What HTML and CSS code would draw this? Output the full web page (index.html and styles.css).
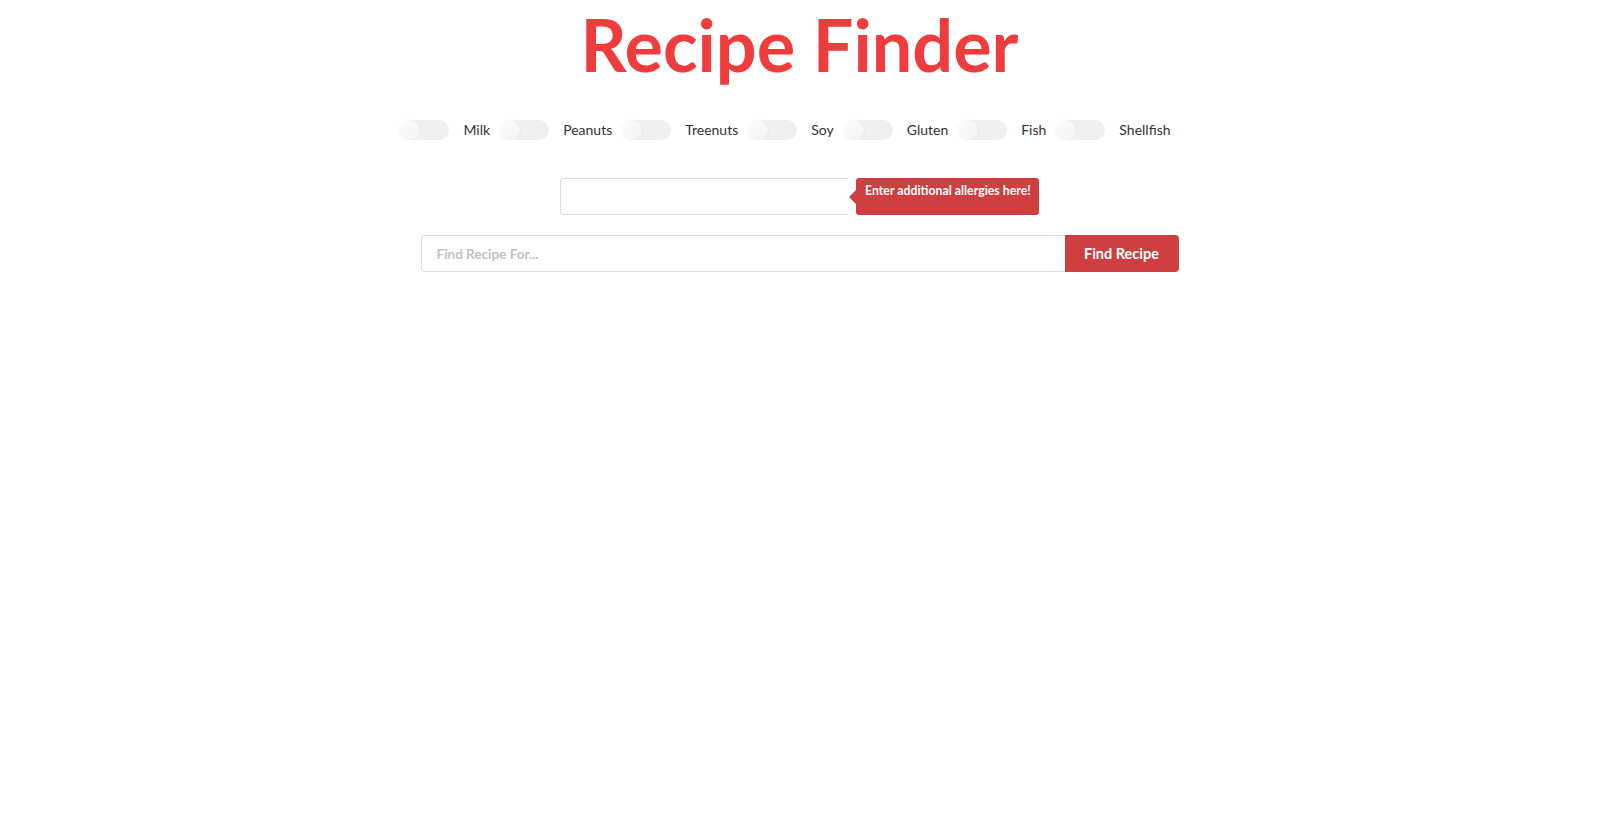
FILE: index.html
```html
<!DOCTYPE html>
<html lang="en">
<head>
<meta charset="utf-8">
<title>Recipe Finder</title>
<link rel="stylesheet" href="styles.css">
</head>
<body>
<main class="page">
  <h1 class="title">Recipe Finder</h1>

  <div class="allergens">
    <div class="allergen"><span class="switch"><span class="knob"></span></span><span class="label">Milk</span></div>
    <div class="allergen"><span class="switch"><span class="knob"></span></span><span class="label">Peanuts</span></div>
    <div class="allergen"><span class="switch"><span class="knob"></span></span><span class="label">Treenuts</span></div>
    <div class="allergen"><span class="switch"><span class="knob"></span></span><span class="label">Soy</span></div>
    <div class="allergen"><span class="switch"><span class="knob"></span></span><span class="label">Gluten</span></div>
    <div class="allergen"><span class="switch"><span class="knob"></span></span><span class="label">Fish</span></div>
    <div class="allergen"><span class="switch"><span class="knob"></span></span><span class="label">Shellfish</span></div>
  </div>

  <div class="extra">
    <input class="extra-input" type="text" aria-label="Additional allergies">
    <div class="tip">Enter additional allergies here!</div>
  </div>

  <form class="search">
    <input class="search-input" type="text" placeholder="Find Recipe For...">
    <button class="search-btn" type="button">Find Recipe</button>
  </form>
</main>
</body>
</html>
```

FILE: styles.css
```css
html, body {
  margin: 0;
  padding: 0;
  background: #ffffff;
}

body {
  font-family: Lato, "Liberation Sans", sans-serif;
  color: #333333;
}

.page {
  display: flex;
  flex-direction: column;
  align-items: center;
}

.title {
  margin: 8px 0 0;
  font-size: 72px;
  line-height: 1;
  font-weight: 700;
  color: #f03c3c;
  letter-spacing: 0;
}

.allergens {
  display: flex;
  align-items: center;
  margin-top: 40px;
  padding-right: 20px;
}

.allergen {
  display: flex;
  align-items: center;
}

.switch {
  position: relative;
  display: block;
  width: 50px;
  height: 20px;
  border-radius: 10px;
  background: #f0f0f0;
}

.knob {
  position: absolute;
  left: 0;
  top: 0;
  width: 21px;
  height: 20px;
  border-radius: 50%;
  background: linear-gradient(135deg, #fdfdfd 0%, #f3f3f3 100%);
  box-shadow: 1px 0 2px rgba(0, 0, 0, 0.04);
}

.label {
  font-size: 14px;
  line-height: 20px;
  margin: 0 9px 0 14px;
  color: #333333;
}

.extra {
  display: flex;
  align-items: stretch;
  margin-top: 38px;
}

.extra-input {
  box-sizing: border-box;
  width: 288px;
  height: 37px;
  margin: 0;
  border: 1px solid #dddddd;
  border-right-color: transparent;
  border-radius: 4px 0 0 4px;
  background: #ffffff;
  outline: none;
}

.tip {
  position: relative;
  box-sizing: border-box;
  width: 183px;
  height: 37px;
  margin-left: 8px;
  padding: 6px 0 0 9px;
  background: #cf3f3f;
  color: #ffffff;
  border-radius: 3px;
  font-size: 12.3px;
  line-height: 14px;
  font-weight: 700;
  white-space: nowrap;
}

.tip::before {
  content: "";
  position: absolute;
  left: -7px;
  top: 12px;
  border-style: solid;
  border-width: 7px 7px 7px 0;
  border-color: transparent #cf3f3f transparent transparent;
}

.search {
  display: flex;
  margin: 20px 0 0;
}

.search-input {
  box-sizing: border-box;
  width: 644px;
  height: 37px;
  margin: 0;
  padding: 0 15px;
  border: 1px solid #dddddd;
  border-right: none;
  border-radius: 4px 0 0 4px;
  font-family: Lato, "Liberation Sans", sans-serif;
  font-size: 13.5px;
  font-weight: 700;
  color: #333333;
  outline: none;
}

.search-input::placeholder {
  color: #c2c2c2;
}

.search-btn {
  box-sizing: border-box;
  width: 114px;
  height: 37px;
  margin: 0;
  padding: 0;
  border: none;
  border-radius: 0 4px 4px 0;
  background: #cf3f3f;
  color: #ffffff;
  font-family: Lato, "Liberation Sans", sans-serif;
  font-size: 14.5px;
  font-weight: 700;
  cursor: pointer;
}
```
